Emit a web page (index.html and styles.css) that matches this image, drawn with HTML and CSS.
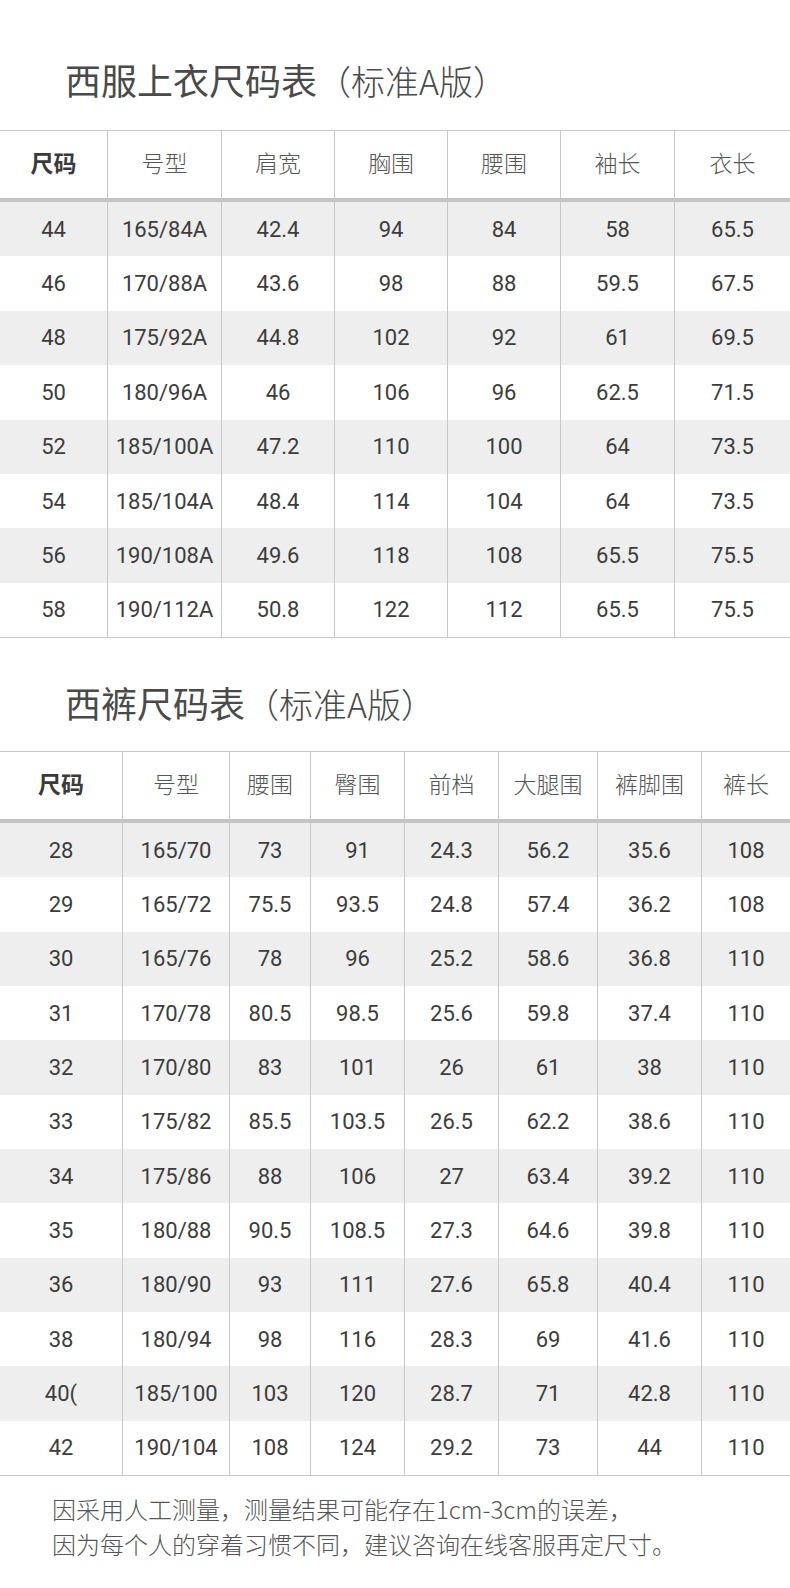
FILE: index.html
```html
<!DOCTYPE html>
<html lang="zh-CN">
<head>
<meta charset="utf-8">
<title>尺码表</title>
<link rel="stylesheet" href="styles.css">
</head>
<body>
<div class="page">
  <h2 class="title title-first">西服上衣尺码表<span class="title-sub">（标准A版）</span></h2>
  <table class="size-table jacket">
    <colgroup>
      <col class="c107"><col class="c114"><col class="c113"><col class="c113"><col class="c113"><col class="c114"><col class="c116">
    </colgroup>
    <thead>
      <tr><th class="key">尺码</th><th>号型</th><th>肩宽</th><th>胸围</th><th>腰围</th><th>袖长</th><th>衣长</th></tr>
    </thead>
    <tbody>
      <tr><td>44</td><td>165/84A</td><td>42.4</td><td>94</td><td>84</td><td>58</td><td>65.5</td></tr>
      <tr><td>46</td><td>170/88A</td><td>43.6</td><td>98</td><td>88</td><td>59.5</td><td>67.5</td></tr>
      <tr><td>48</td><td>175/92A</td><td>44.8</td><td>102</td><td>92</td><td>61</td><td>69.5</td></tr>
      <tr><td>50</td><td>180/96A</td><td>46</td><td>106</td><td>96</td><td>62.5</td><td>71.5</td></tr>
      <tr><td>52</td><td>185/100A</td><td>47.2</td><td>110</td><td>100</td><td>64</td><td>73.5</td></tr>
      <tr><td>54</td><td>185/104A</td><td>48.4</td><td>114</td><td>104</td><td>64</td><td>73.5</td></tr>
      <tr><td>56</td><td>190/108A</td><td>49.6</td><td>118</td><td>108</td><td>65.5</td><td>75.5</td></tr>
      <tr><td>58</td><td>190/112A</td><td>50.8</td><td>122</td><td>112</td><td>65.5</td><td>75.5</td></tr>
    </tbody>
  </table>

  <h2 class="title title-second">西裤尺码表<span class="title-sub">（标准A版）</span></h2>
  <table class="size-table trousers">
    <colgroup>
      <col class="c122"><col class="c107"><col class="c81"><col class="c94"><col class="c94"><col class="c99"><col class="c104"><col class="c89">
    </colgroup>
    <thead>
      <tr><th class="key">尺码</th><th>号型</th><th>腰围</th><th>臀围</th><th>前档</th><th>大腿围</th><th>裤脚围</th><th>裤长</th></tr>
    </thead>
    <tbody>
      <tr><td>28</td><td>165/70</td><td>73</td><td>91</td><td>24.3</td><td>56.2</td><td>35.6</td><td>108</td></tr>
      <tr><td>29</td><td>165/72</td><td>75.5</td><td>93.5</td><td>24.8</td><td>57.4</td><td>36.2</td><td>108</td></tr>
      <tr><td>30</td><td>165/76</td><td>78</td><td>96</td><td>25.2</td><td>58.6</td><td>36.8</td><td>110</td></tr>
      <tr><td>31</td><td>170/78</td><td>80.5</td><td>98.5</td><td>25.6</td><td>59.8</td><td>37.4</td><td>110</td></tr>
      <tr><td>32</td><td>170/80</td><td>83</td><td>101</td><td>26</td><td>61</td><td>38</td><td>110</td></tr>
      <tr><td>33</td><td>175/82</td><td>85.5</td><td>103.5</td><td>26.5</td><td>62.2</td><td>38.6</td><td>110</td></tr>
      <tr><td>34</td><td>175/86</td><td>88</td><td>106</td><td>27</td><td>63.4</td><td>39.2</td><td>110</td></tr>
      <tr><td>35</td><td>180/88</td><td>90.5</td><td>108.5</td><td>27.3</td><td>64.6</td><td>39.8</td><td>110</td></tr>
      <tr><td>36</td><td>180/90</td><td>93</td><td>111</td><td>27.6</td><td>65.8</td><td>40.4</td><td>110</td></tr>
      <tr><td>38</td><td>180/94</td><td>98</td><td>116</td><td>28.3</td><td>69</td><td>41.6</td><td>110</td></tr>
      <tr><td>40(</td><td>185/100</td><td>103</td><td>120</td><td>28.7</td><td>71</td><td>42.8</td><td>110</td></tr>
      <tr><td>42</td><td>190/104</td><td>108</td><td>124</td><td>29.2</td><td>73</td><td>44</td><td>110</td></tr>
    </tbody>
  </table>

  <p class="note">因采用人工测量，测量结果可能存在1cm-3cm的误差，<br>因为每个人的穿着习惯不同，建议咨询在线客服再定尺寸。</p>
</div>
</body>
</html>
```
FILE: styles.css
```css
html, body {
  margin: 0;
  padding: 0;
  background: #ffffff;
}

.page {
  width: 790px;
  font-family: "Noto Sans CJK SC", "Noto Sans", sans-serif;
  color: #4a4a4a;
}

.title {
  margin: 0;
  padding-left: 65px;
  font-size: 36px;
  font-weight: 400;
  line-height: 44px;
  color: #4a4a4a;
}

.title-first {
  padding-top: 57px;
  margin-bottom: 27px;
}

.title-second {
  padding-top: 42px;
  margin-bottom: 25px;
}

.title-sub {
  font-size: 34px;
  font-weight: 300;
}

.size-table {
  width: 790px;
  table-layout: fixed;
  border-collapse: separate;
  border-spacing: 0;
  border-top: 1px solid #c8c8c8;
  border-bottom: 1px solid #c8c8c8;
}

.c81 { width: 81px; }
.c89 { width: 89px; }
.c94 { width: 94px; }
.c99 { width: 99px; }
.c104 { width: 104px; }
.c107 { width: 107px; }
.c113 { width: 113px; }
.c114 { width: 114px; }
.c116 { width: 116px; }
.c122 { width: 122px; }

.size-table th {
  height: 71px;
  padding: 0 0 5px 0;
  box-sizing: border-box;
  border-bottom: 4px solid #c4c4c4;
  font-family: "Noto Sans CJK SC", sans-serif;
  font-size: 23px;
  font-weight: 300;
  color: #555555;
  text-align: center;
  vertical-align: middle;
}

.size-table th.key {
  font-weight: 700;
  color: #3a3a3a;
}

.size-table td {
  padding: 0;
  text-align: center;
  vertical-align: middle;
  font-family: Roboto, "Liberation Sans", sans-serif;
  font-size: 22px;
  color: #3c3c3c;
}

.size-table th + th,
.size-table td + td {
  border-left: 1px solid #c8c8c8;
}

.jacket tbody tr {
  height: 54.375px;
}

.trousers tbody tr {
  height: 54.33px;
}

.size-table tbody tr:nth-child(odd) td {
  background: #eeeeee;
}

.note {
  margin: 0;
  padding: 15px 0 0 52px;
  font-size: 24px;
  line-height: 35px;
  font-weight: 300;
  color: #555555;
}
```
